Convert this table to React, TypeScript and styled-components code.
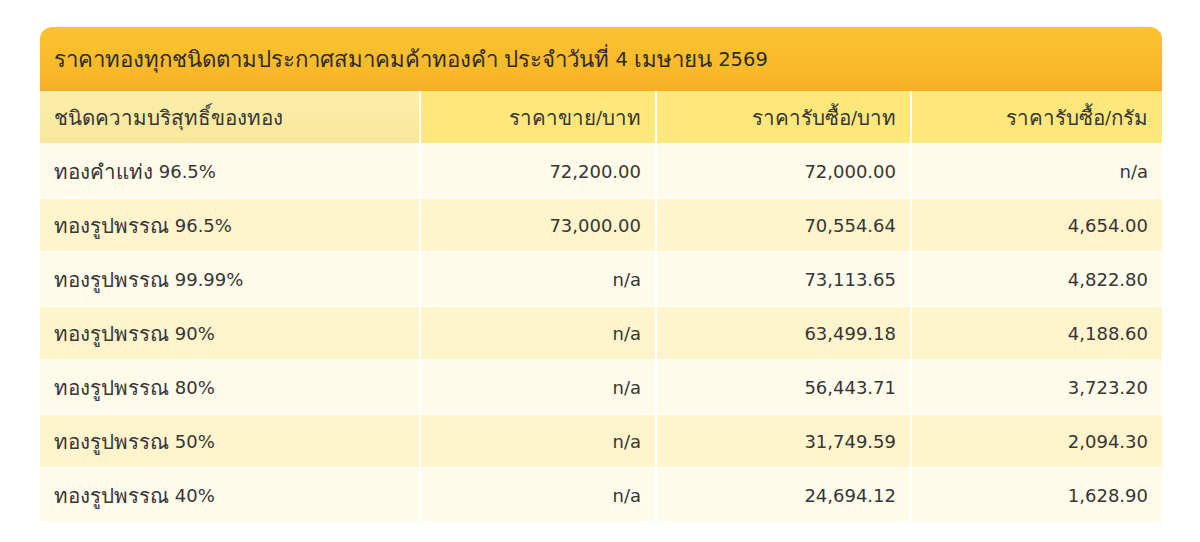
import styled, { createGlobalStyle } from "styled-components";

const GlobalStyle = createGlobalStyle`
  html, body {
    margin: 0;
    padding: 0;
    background: #ffffff;
  }
  body {
    font-family: Tahoma, "DejaVu Sans", "Noto Sans", sans-serif;
    color: #333333;
  }
`;

const Page = styled.div`
  padding: 27px 38px 0 40px;
`;

const Board = styled.div`
  width: 1122px;
`;

const TitleBar = styled.div`
  height: 64px;
  display: flex;
  align-items: center;
  padding: 0 14px;
  border-radius: 12px 12px 0 0;
  background: linear-gradient(180deg, #fcc22f 0%, #f9b928 70%, #f4ae25 100%);
  font-size: 19.5px;
  color: #2b2b2b;
  white-space: pre;
`;

const Grid = styled.div`
  display: grid;
  grid-template-columns: 379px 234px 253px 250px;
  column-gap: 2px;
`;

const Cell = styled.div<{ $tone: "head" | "headFirst" | "odd" | "even"; $right?: boolean }>`
  height: 52px;
  display: flex;
  align-items: center;
  justify-content: ${(p) => (p.$right ? "flex-end" : "flex-start")};
  padding: 0 14px;
  border-bottom: 2px solid #fffdf4;
  font-size: 18px;
  color: #363636;
  white-space: pre;
  background: ${(p) =>
    p.$tone === "headFirst"
      ? "linear-gradient(180deg, #fbeeaa 0%, #f9e79c 100%)"
      : p.$tone === "head"
      ? "#fee87c"
      : p.$tone === "odd"
      ? "#fffbea"
      : "#fff4cc"};
`;

// the Thai fallback face runs small next to the Latin digits
const Thai = styled.span`
  font-size: 1.14em;
`;

function Text({ value }: { value: string }) {
  const parts = value.split(/([\u0E00-\u0E7F]+)/).filter(Boolean);
  return (
    <>
      {parts.map((p, i) => (/[\u0E00-\u0E7F]/.test(p) ? <Thai key={i}>{p}</Thai> : <span key={i}>{p}</span>))}
    </>
  );
}

const headers = ["ชนิดความบริสุทธิ์ของทอง", "ราคาขาย/บาท", "ราคารับซื้อ/บาท", "ราคารับซื้อ/กรัม"];

const rows = [
  ["ทองคำแท่ง 96.5%", "72,200.00", "72,000.00", "n/a"],
  ["ทองรูปพรรณ 96.5%", "73,000.00", "70,554.64", "4,654.00"],
  ["ทองรูปพรรณ 99.99%", "n/a", "73,113.65", "4,822.80"],
  ["ทองรูปพรรณ 90%", "n/a", "63,499.18", "4,188.60"],
  ["ทองรูปพรรณ 80%", "n/a", "56,443.71", "3,723.20"],
  ["ทองรูปพรรณ 50%", "n/a", "31,749.59", "2,094.30"],
  ["ทองรูปพรรณ 40%", "n/a", "24,694.12", "1,628.90"],
];

function App() {
  return (
    <Page>
      <GlobalStyle />
      <Board>
        <TitleBar>
          <Text value="ราคาทองทุกชนิดตามประกาศสมาคมค้าทองคำ ประจำวันที่ 4 เมษายน 2569" />
        </TitleBar>
        <Grid>
          {headers.map((h, i) => (
            <Cell key={h} $tone={i === 0 ? "headFirst" : "head"} $right={i > 0}>
              <Text value={h} />
            </Cell>
          ))}
          {rows.map((row, r) =>
            row.map((v, c) => (
              <Cell key={r + "-" + c} $tone={r % 2 === 0 ? "odd" : "even"} $right={c > 0}>
                <Text value={v} />
              </Cell>
            ))
          )}
        </Grid>
      </Board>
    </Page>
  );
}

export default App;
